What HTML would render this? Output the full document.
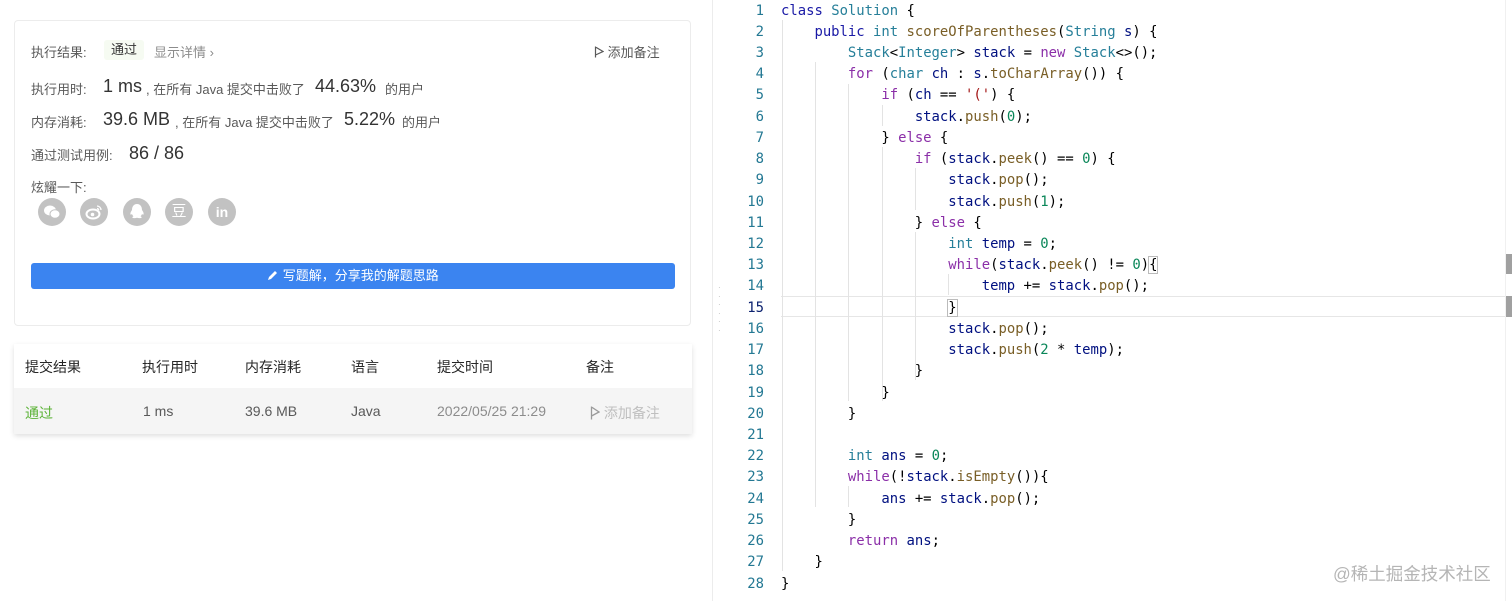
<!DOCTYPE html>
<html><head><meta charset="utf-8"><style>
*{margin:0;padding:0;box-sizing:border-box}
body{width:1512px;height:601px;overflow:hidden;background:#fff;font-family:"Liberation Sans","Noto Sans CJK SC",sans-serif;position:relative;color:#262626}
.abs{position:absolute;white-space:nowrap}
.card{position:absolute;left:14px;top:20px;width:677px;height:306px;border:1px solid #ececec;border-radius:4px}
.lbl{font-size:13px;color:#595959}
.big{font-size:18px;color:#333}
.ic{position:absolute;top:198px;width:28px;height:28px;border-radius:50%;background:#c2c2c2}
.btn{position:absolute;left:31px;top:263px;width:644px;height:26px;background:#3b84f0;border-radius:3px;color:#fff;font-size:13px;text-align:center;line-height:26px}
.tbl{position:absolute;left:14px;top:344px;width:678px;height:90px;box-shadow:0 2px 5px rgba(0,0,0,.13)}
.th{position:absolute;top:13px;font-size:14px;color:#262626}
.tr{position:absolute;left:0;top:44px;width:678px;height:46px;background:#f5f5f5}
.td{position:absolute;top:15px;font-size:14px;color:#595959}
.div{position:absolute;left:712px;top:0;width:1px;height:601px;background:#ececec}
.code{position:absolute;left:0;top:0;font-family:"DejaVu Sans Mono","Liberation Mono",monospace;font-size:13.9px}
.ln{position:absolute;left:726px;width:38px;text-align:right;color:#237893;font-family:"DejaVu Sans Mono",monospace;font-size:13.9px;line-height:21.22px}
.cl{position:absolute;left:781px;line-height:21.22px;color:#000;white-space:pre}
.g{position:absolute;width:1px;background:#e3e3e3}
.k{color:#1a1aa6}.p{color:#8b2fa8}.t{color:#267f99}.m{color:#795e26}.v{color:#001080}.n{color:#098658}.s{color:#a31515}
</style></head><body>
<div class="card"></div>
<div class="abs lbl" style="left:31px;top:42px">执行结果:</div>
<div class="abs" style="left:104px;top:40px;width:40px;height:20px;background:#f6fbf2;border-radius:3px;font-size:13px;color:#333;text-align:center;line-height:20px">通过</div>
<div class="abs" style="left:154px;top:42px;font-size:13px;color:#8c8c8c">显示详情 ›</div>
<div class="abs" style="left:594px;top:42px;font-size:13px;color:#595959"><svg width="10" height="12" style="vertical-align:-1px"><path d="M1.5 0.5V11.5M1.5 1L9 5.5L1.5 9" fill="none" stroke="#595959" stroke-width="1.2"/></svg> 添加备注</div>

<div class="abs lbl" style="left:31px;top:79px">执行用时:</div>
<div class="abs big" style="left:103px;top:76px">1 ms</div>
<div class="abs lbl" style="left:146px;top:79px">, 在所有 Java 提交中击败了</div>
<div class="abs big" style="left:315px;top:76px">44.63%</div>
<div class="abs lbl" style="left:385px;top:79px">的用户</div>

<div class="abs lbl" style="left:31px;top:112px">内存消耗:</div>
<div class="abs big" style="left:103px;top:109px">39.6 MB</div>
<div class="abs lbl" style="left:175px;top:112px">, 在所有 Java 提交中击败了</div>
<div class="abs big" style="left:344px;top:109px">5.22%</div>
<div class="abs lbl" style="left:402px;top:112px">的用户</div>

<div class="abs lbl" style="left:31px;top:145px">通过测试用例:</div>
<div class="abs big" style="left:129px;top:143px">86 / 86</div>

<div class="abs lbl" style="left:31px;top:177px">炫耀一下:</div>
<div class="ic" style="left:38px"><svg width="28" height="28"><ellipse cx="12" cy="12.5" rx="6" ry="5" fill="#fff"/><ellipse cx="17" cy="16" rx="5" ry="4.2" fill="#fff" stroke="#c2c2c2" stroke-width="1"/></svg></div>
<div class="ic" style="left:80px"><svg width="28" height="28"><ellipse cx="13" cy="16" rx="6.5" ry="4.5" fill="none" stroke="#fff" stroke-width="2"/><circle cx="12.5" cy="16.5" r="1.8" fill="#fff"/><path d="M17 8a4 4 0 0 1 4 4M17 10.5a1.7 1.7 0 0 1 1.7 1.7" fill="none" stroke="#fff" stroke-width="1.3"/></svg></div>
<div class="ic" style="left:123px"><svg width="28" height="28"><path d="M14 6c-3.5 0-5 3-5 6c-1 1.5-2 3-1.5 4.5c.5 .5 1.5-.5 1.5-.5c.3 1 1 1.8 1.5 2.3c-1 .4-1.5 1-1 1.5c.8 .6 3.5 .3 4.5 0c1 .3 3.7 .6 4.5 0c.5-.5 0-1.1-1-1.5c.5-.5 1.2-1.3 1.5-2.3c0 0 1 1 1.5 .5c.5-1.5-.5-3-1.5-4.5c0-3-1.5-6-5-6z" fill="#fff"/></svg></div>
<div class="ic" style="left:165px;color:#fff;font-size:15px;text-align:center;line-height:28px">豆</div>
<div class="ic" style="left:208px;color:#fff;font-size:14px;font-weight:bold;text-align:center;line-height:28px">in</div>
<div class="btn"><svg width="12" height="12" style="vertical-align:-1px"><path d="M1 11L2 8L8 2L10 4L4 10Z" fill="#fff"/></svg> 写题解，分享我的解题思路</div>

<div class="tbl">
<div class="th" style="left:11px">提交结果</div>
<div class="th" style="left:128px">执行用时</div>
<div class="th" style="left:231px">内存消耗</div>
<div class="th" style="left:337px">语言</div>
<div class="th" style="left:423px">提交时间</div>
<div class="th" style="left:572px">备注</div>
<div class="tr">
<div class="td" style="left:11px;color:#5cb338">通过</div>
<div class="td" style="left:129px">1 ms</div>
<div class="td" style="left:231px">39.6 MB</div>
<div class="td" style="left:337px">Java</div>
<div class="td" style="left:423px;color:#8c8c8c">2022/05/25 21:29</div>
<div class="td" style="left:576px;color:#bfbfbf"><svg width="10" height="14" style="vertical-align:-2px"><path d="M1.5 0.5V13.5M1.5 1L9 6L1.5 10" fill="none" stroke="#9a9a9a" stroke-width="1.3"/></svg> 添加备注</div>
</div></div>

<div class="div"></div>
<div class="abs" style="left:718px;top:284px;color:#bbb;font-size:8px;line-height:8.5px">·<br>·<br>·<br>·<br>·<br>·</div>

<div style="position:absolute;left:781px;top:296px;width:724px;height:21px;border-top:1px solid #e6e6e6;border-bottom:1px solid #e6e6e6"></div>
<div style="position:absolute;left:1505px;top:254px;width:7px;height:20px;background:#a0a0a0"></div>
<div style="position:absolute;left:1505px;top:296px;width:7px;height:21px;background:#a0a0a0"></div>
<div style="position:absolute;left:1505px;top:0;width:1px;height:601px;background:#f0f0f0"></div>

<div class="g" style="left:782px;top:20px;height:551px"></div>
<div class="g" style="left:815px;top:62px;height:445px"></div>
<div class="g" style="left:848px;top:84px;height:317px"></div>
<div class="g" style="left:882px;top:105px;height:21px"></div>
<div class="g" style="left:882px;top:147px;height:254px"></div>
<div class="g" style="left:915px;top:168px;height:42px"></div>
<div class="g" style="left:915px;top:232px;height:148px"></div>
<div class="g" style="left:948px;top:274px;height:21px"></div>
<div class="g" style="left:848px;top:486px;height:21px"></div>

<div class="code">
<div class="ln" style="top:0.6px">1<br>2<br>3<br>4<br>5<br>6<br>7<br>8<br>9<br>10<br>11<br>12<br>13<br>14<br><span style="color:#0b216f">15</span><br>16<br>17<br>18<br>19<br>20<br>21<br>22<br>23<br>24<br>25<br>26<br>27<br>28</div>
<div class="cl" style="top:0.6px"><span class="k">class</span> <span class="t">Solution</span> {
    <span class="k">public</span> <span class="t">int</span> <span class="m">scoreOfParentheses</span>(<span class="t">String</span> <span class="v">s</span>) {
        <span class="t">Stack</span>&lt;<span class="t">Integer</span>&gt; <span class="v">stack</span> = <span class="p">new</span> <span class="t">Stack</span>&lt;&gt;();
        <span class="p">for</span> (<span class="t">char</span> <span class="v">ch</span> : <span class="v">s</span>.<span class="m">toCharArray</span>()) {
            <span class="p">if</span> (<span class="v">ch</span> == <span class="s">'('</span>) {
                <span class="v">stack</span>.<span class="m">push</span>(<span class="n">0</span>);
            } <span class="p">else</span> {
                <span class="p">if</span> (<span class="v">stack</span>.<span class="m">peek</span>() == <span class="n">0</span>) {
                    <span class="v">stack</span>.<span class="m">pop</span>();
                    <span class="v">stack</span>.<span class="m">push</span>(<span class="n">1</span>);
                } <span class="p">else</span> {
                    <span class="t">int</span> <span class="v">temp</span> = <span class="n">0</span>;
                    <span class="p">while</span>(<span class="v">stack</span>.<span class="m">peek</span>() != <span class="n">0</span>)<span style="outline:1px solid #bbb">{</span>
                        <span class="v">temp</span> += <span class="v">stack</span>.<span class="m">pop</span>();
                    <span style="outline:1px solid #bbb">}</span>
                    <span class="v">stack</span>.<span class="m">pop</span>();
                    <span class="v">stack</span>.<span class="m">push</span>(<span class="n">2</span> * <span class="v">temp</span>);
                }
            }
        }

        <span class="t">int</span> <span class="v">ans</span> = <span class="n">0</span>;
        <span class="p">while</span>(!<span class="v">stack</span>.<span class="m">isEmpty</span>()){
            <span class="v">ans</span> += <span class="v">stack</span>.<span class="m">pop</span>();
        }
        <span class="p">return</span> <span class="v">ans</span>;
    }
}</div>
</div>
<div class="abs" style="left:1333px;top:561px;font-size:17.5px;color:#b5b5b5">@稀土掘金技术社区</div>
</body></html>
